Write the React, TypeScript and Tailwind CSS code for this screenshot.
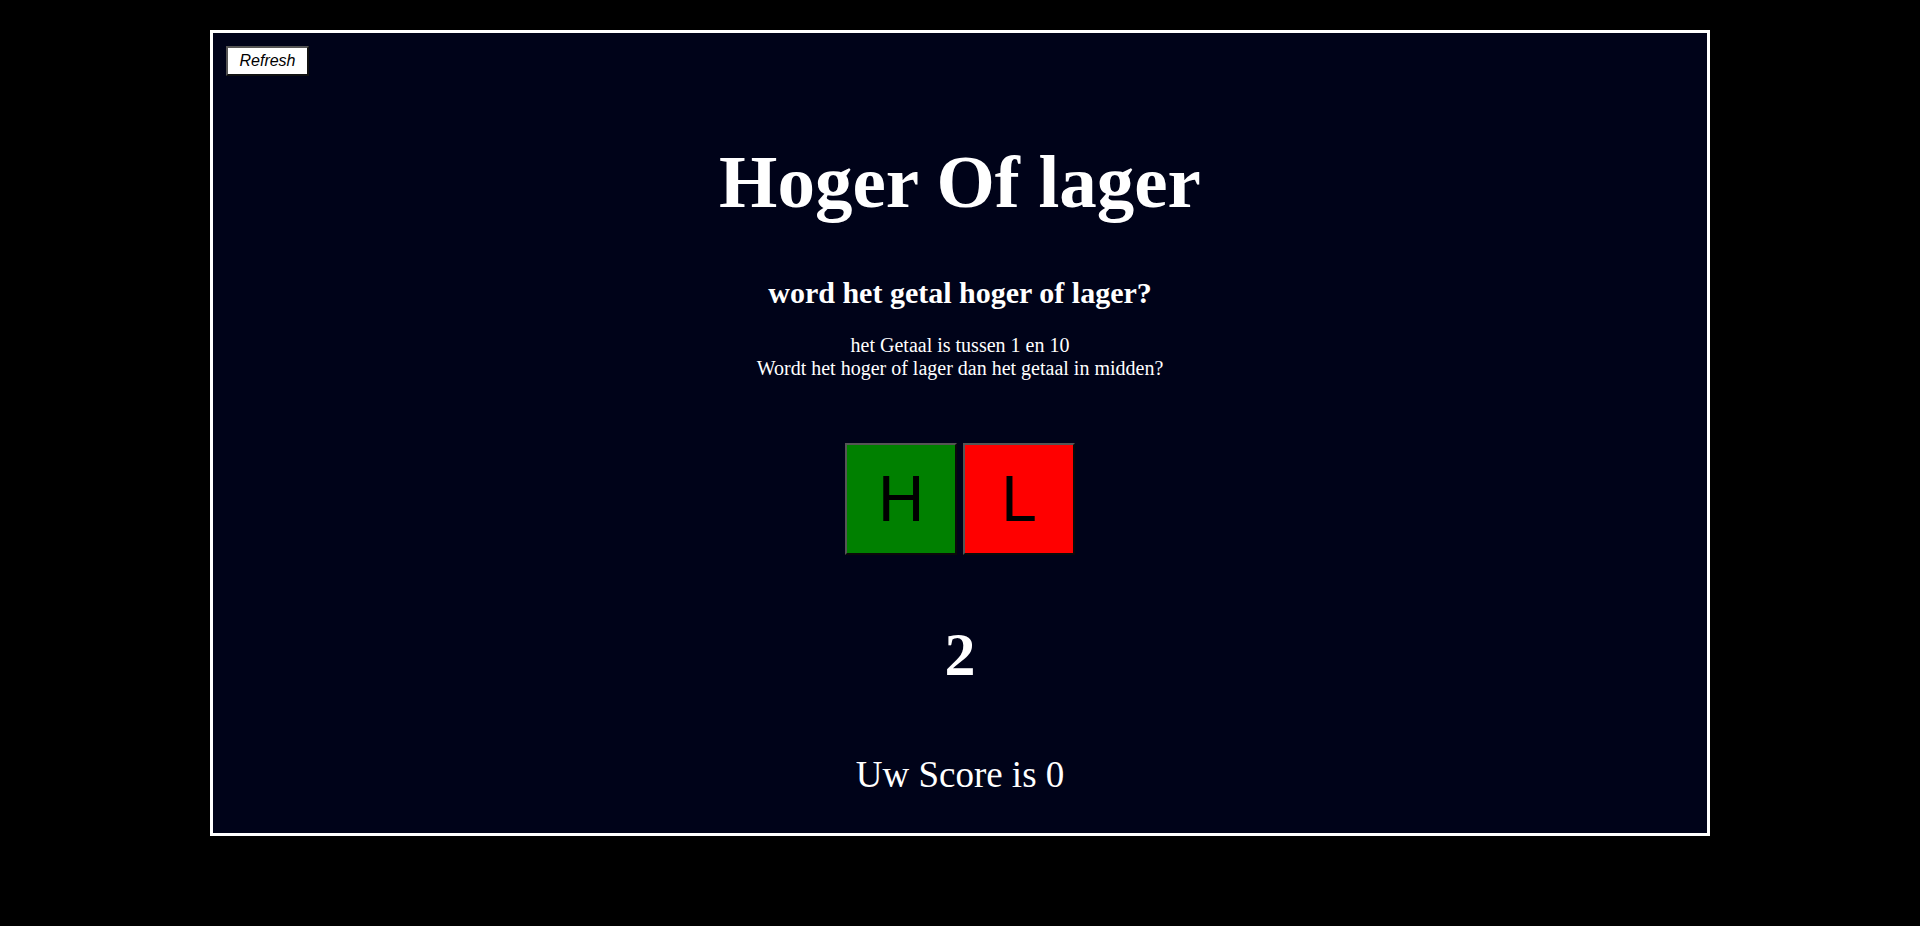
import React from "react";

export default function App() {
  return (
    <div className="w-[1920px] h-[926px] bg-black overflow-hidden">
      <div className="mx-auto mt-[30px] box-border w-[1500px] h-[806px] border-[3px] border-white bg-[#000319] text-white" style={{ fontFamily: '"Liberation Serif", "Times New Roman", serif' }}>
        <div className="pl-[13px] pt-[13px]">
          <button
            className="box-border w-[83px] h-[30px] bg-white text-black italic text-[16px] leading-none border-2 border-t-[#555] border-l-[#555] border-r-[#111] border-b-[#111]"
            style={{ fontFamily: '"Liberation Sans", Arial, sans-serif' }}
          >
            Refresh
          </button>
        </div>
        <h1 className="mt-[68px] text-center font-bold text-[75px] leading-[75px]">Hoger Of lager</h1>
        <h2 className="mt-[59px] text-center font-bold text-[30px] leading-[30px]">word het getal hoger of lager?</h2>
        <p className="mt-[26px] text-center text-[20px] leading-[23px]">
          het Getaal is tussen 1 en 10
          <br />
          Wordt het hoger of lager dan het getaal in midden?
        </p>
        <div className="mt-[63px] flex justify-center gap-[6px]">
          <button
            className="box-border w-[112px] h-[112px] bg-[#008000] text-black text-[64px] leading-none border-2 border-t-[#555] border-l-[#555] border-r-[#0a0a0a] border-b-[#0a0a0a]"
            style={{ fontFamily: '"Liberation Sans", Arial, sans-serif' }}
          >
            H
          </button>
          <button
            className="box-border w-[112px] h-[112px] bg-[#ff0000] text-black text-[64px] leading-none border-2 border-t-[#555] border-l-[#555] border-r-[#0a0a0a] border-b-[#0a0a0a]"
            style={{ fontFamily: '"Liberation Sans", Arial, sans-serif' }}
          >
            L
          </button>
        </div>
        <div className="mt-[68px] text-center font-bold text-[62px] leading-[62px]">2</div>
        <div className="mt-[71px] text-center text-[37px] leading-[37px]">Uw Score is 0</div>
      </div>
    </div>
  );
}
